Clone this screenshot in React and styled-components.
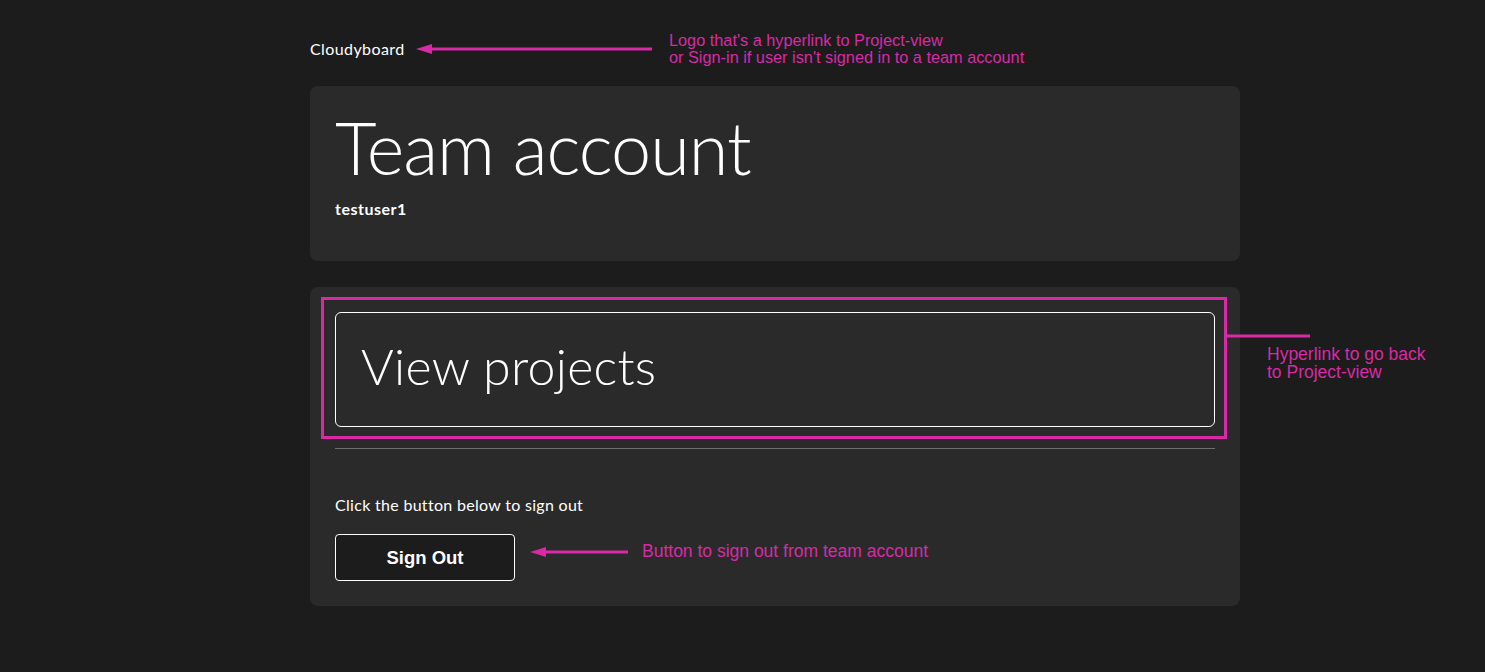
import React from 'react';
import styled, { createGlobalStyle } from 'styled-components';

const PINK = '#d82aa5';

const GlobalStyle = createGlobalStyle`
  html, body {
    margin: 0;
    padding: 0;
    background: #1c1c1c;
    color: #ffffff;
    font-family: Lato, "Noto Sans", sans-serif;
  }
`;

const Page = styled.div`
  position: relative;
  min-height: 672px;
  box-sizing: border-box;
  padding: 40px 0 60px 310px;
`;

const Column = styled.main`
  width: 930px;
  display: flex;
  flex-direction: column;
`;

const Logo = styled.a`
  font-size: 16px;
  line-height: 18px;
  letter-spacing: 0.4px;
  color: #fff;
  text-decoration: none;
  margin-bottom: 28px;
  align-self: flex-start;
`;

const Card = styled.section`
  background: #2a2a2a;
  border-radius: 8px;
  padding: 25px;
  margin-bottom: 26px;
  box-sizing: border-box;
  min-height: ${p => p.$minH || 'auto'};
`;

const Title = styled.h1`
  margin: 0;
  font-size: 72px;
  line-height: 72px;
  font-weight: 300;
  letter-spacing: -1px;
`;

const Username = styled.div`
  font-size: 16px;
  line-height: 20px;
  font-weight: 700;
  letter-spacing: 0.5px;
  margin-top: 16px;
`;

const ProjectsLink = styled.a`
  display: block;
  border: 1px solid #fff;
  border-radius: 6px;
  padding: 22px 25px 0;
  height: 115px;
  box-sizing: border-box;
  color: #fff;
  text-decoration: none;
  font-size: 50px;
  line-height: 62px;
  font-weight: 300;
  letter-spacing: 0.3px;
`;

const Divider = styled.hr`
  border: none;
  border-top: 1px solid #6e6e6e;
  margin: 21px 0 46px;
`;

const Hint = styled.p`
  margin: 0 0 19px;
  font-size: 16px;
  line-height: 20px;
  letter-spacing: 0.3px;
`;

const SignOutButton = styled.button`
  width: 180px;
  height: 47px;
  background: #1c1c1c;
  border: 1px solid #fff;
  border-radius: 4px;
  color: #fff;
  font-family: "Liberation Sans", Arial, sans-serif;
  font-size: 18.5px;
  font-weight: 700;
  cursor: pointer;
`;

const Overlay = styled.svg`
  position: absolute;
  inset: 0;
  width: 1485px;
  height: 672px;
  pointer-events: none;
`;

const Note = styled.div`
  position: absolute;
  left: ${p => p.$x}px;
  top: ${p => p.$y}px;
  color: ${PINK};
  font-family: "Liberation Sans", Arial, sans-serif;
  font-size: ${p => p.$size}px;
  line-height: ${p => p.$lh}px;
  white-space: nowrap;
`;

function Annotations() {
  return (
    <>
      <Overlay viewBox="0 0 1485 672">
        <g stroke={PINK} strokeWidth="3" fill="none">
          <line x1="428" y1="49" x2="652" y2="49" />
          <rect x="322.5" y="298.5" width="903" height="139" />
          <line x1="1226" y1="336" x2="1310" y2="336" />
          <line x1="542" y1="552" x2="628" y2="552" />
        </g>
        <g fill={PINK}>
          <polygon points="416,49 432,44 432,54" />
          <polygon points="530,552 546,547 546,557" />
        </g>
      </Overlay>
      <Note $x={669} $y={32} $size={16.3} $lh={16.5}>
        Logo that's a hyperlink to Project-view
        <br />
        or Sign-in if user isn't signed in to a team account
      </Note>
      <Note $x={1267} $y={345} $size={17.5} $lh={18}>
        Hyperlink to go back
        <br />
        to Project-view
      </Note>
      <Note $x={642} $y={541} $size={17.5} $lh={20}>
        Button to sign out from team account
      </Note>
    </>
  );
}

export default function App() {
  return (
    <Page>
      <GlobalStyle />
      <Column>
        <Logo href="#">Cloudyboard</Logo>
        <Card $minH="175px">
          <Title>Team account</Title>
          <Username>testuser1</Username>
        </Card>
        <Card>
          <ProjectsLink href="#">View projects</ProjectsLink>
          <Divider />
          <Hint>Click the button below to sign out</Hint>
          <SignOutButton>Sign Out</SignOutButton>
        </Card>
      </Column>
      <Annotations />
    </Page>
  );
}
